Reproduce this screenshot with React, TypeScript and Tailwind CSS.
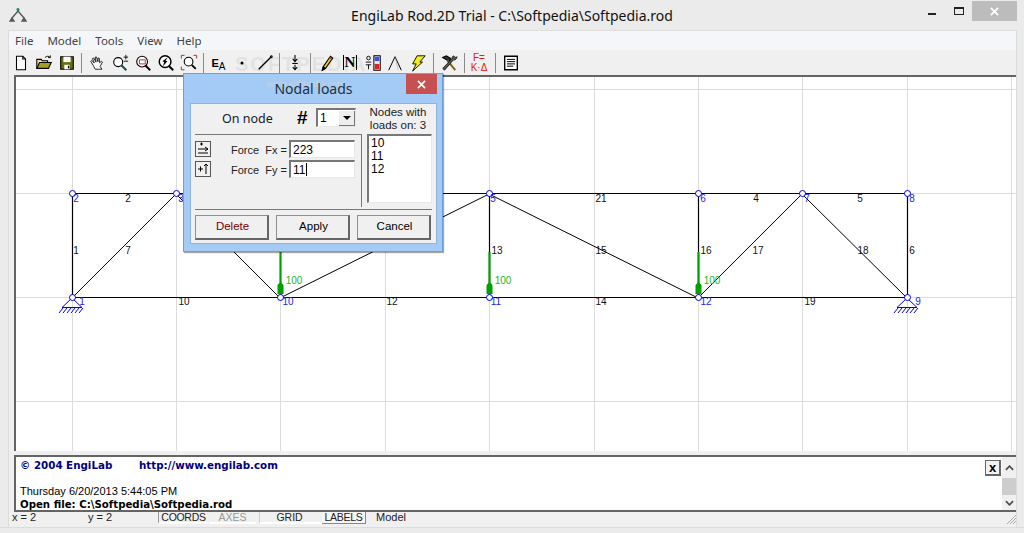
const FONT_UI = "font-['Liberation_Sans',sans-serif]";

const GRID_X = [72, 176, 280, 385, 489, 594, 698, 802, 907, 1011];
const GRID_Y = [90, 194, 298, 402];

const NODES: [number, number][] = [
  [72, 298], [72, 194], [176, 194], [489, 194], [698, 194], [802, 194],
  [907, 194], [907, 298], [280, 298], [489, 298], [698, 298],
];

const THICK: [number, number, number, number][] = [
  [72, 194, 907, 194],
  [72, 298, 907, 298],
  [72, 194, 72, 298],
  [489, 194, 489, 298],
  [698, 194, 698, 298],
  [907, 194, 907, 298],
];

const THIN: [number, number, number, number][] = [
  [72, 298, 176, 194],
  [176, 194, 280, 298],
  [280, 298, 489, 194],
  [489, 194, 698, 298],
  [698, 298, 802, 194],
  [802, 194, 907, 298],
];

const BAR_LABELS: [string, number, number][] = [
  ["1", 76, 254], ["7", 128, 254], ["2", 128, 202], ["10", 184, 305], ["12", 392, 305],
  ["14", 601, 305], ["19", 810, 305], ["13", 497, 254], ["15", 601, 254], ["21", 601, 202],
  ["16", 706, 254], ["17", 758, 254], ["4", 756, 202], ["5", 860, 202], ["18", 863, 254],
  ["6", 912, 254],
];

const NODE_LABELS: [string, number, number][] = [
  ["1", 82, 305], ["2", 76, 202], ["3", 181, 202], ["5", 493, 202], ["6", 703, 202],
  ["7", 807, 202], ["8", 912, 202], ["9", 918, 305], ["10", 288, 305], ["11", 496, 305],
  ["12", 706, 305],
];

function Support({ x, y }: { x: number; y: number }) {
  return (
    <g stroke="#0000e0" strokeWidth="1" fill="none">
      <path d={`M${x} ${y} L${x - 10} ${y + 9.5} H${x + 10} Z`} />
      {[-9, -5, -1, 3, 7, 11].map((d) => (
        <path key={d} d={`M${x + d} ${y + 10} l-4 5`} />
      ))}
    </g>
  );
}

function Load({ x }: { x: number }) {
  return (
    <g>
      <path d={`M${x + 0.5} 252 V296`} stroke="#00a000" strokeWidth="2.2" />
      <path d={`M${x - 2.5} 294 V285 L${x + 0.5} 282 L${x + 3.5} 285 V294 Z`} fill="#00a000" />
      <text x={x + 14} y={284} fontSize="10" fill="#18b82a" textAnchor="middle" fontFamily="Liberation Sans">
        100
      </text>
    </g>
  );
}

function Truss() {
  return (
    <svg viewBox="16 77 1000 374" className="block h-[374px] w-[1000px]">
      {GRID_X.map((x) => (
        <path key={x} d={`M${x + 0.5} 75 V451`} stroke="#dcdcdc" strokeWidth="1" />
      ))}
      {GRID_Y.map((y) => (
        <path key={y} d={`M14 ${y - 0.5} H1016`} stroke="#dcdcdc" strokeWidth="1" />
      ))}
      {THICK.map(([a, b, c, d]) => (
        <line
          key={`${a}-${b}-${c}-${d}`}
          x1={a === c ? a + 0.5 : a}
          y1={a === c ? b : b - 0.5}
          x2={a === c ? c + 0.5 : c}
          y2={a === c ? d : d - 0.5}
          stroke="#000"
          strokeWidth="1.2"
        />
      ))}
      {THIN.map(([a, b, c, d]) => (
        <line key={`${a}-${b}-${c}-${d}`} x1={a} y1={b} x2={c} y2={d} stroke="#000" strokeWidth="1" />
      ))}
      <Load x={280} />
      <Load x={489} />
      <Load x={698} />
      <Support x={72} y={298} />
      <Support x={907} y={298} />
      {NODES.map(([x, y]) => (
        <circle key={`${x}-${y}`} cx={x + 0.5} cy={y - 0.5} r="3" fill="#fff" stroke="#0000e0" strokeWidth="1" />
      ))}
      <g fontFamily="Liberation Sans" fontSize="10" textAnchor="middle">
        {BAR_LABELS.map(([t, x, y]) => (
          <text key={`b${t}`} x={x} y={y} fill="#111">
            {t}
          </text>
        ))}
        {NODE_LABELS.map(([t, x, y]) => (
          <text key={`n${t}`} x={x} y={y} fill="#2222ee">
            {t}
          </text>
        ))}
      </g>
    </svg>
  );
}

function Tool({ children, w = 23 }: { children: React.ReactNode; w?: number }) {
  return (
    <div className="flex h-[24px] items-center justify-center" style={{ width: w }}>
      <svg viewBox="0 0 20 20" className="h-[18px] w-[18px]" fill="none" stroke="#000" strokeWidth="1.2">
        {children}
      </svg>
    </div>
  );
}

function Sep() {
  return <div className="mx-[3px] h-[20px] w-px shrink-0 bg-[#8a8a8a]" />;
}

function Toolbar() {
  return (
    <div className="relative flex h-[25px] items-center overflow-hidden bg-[#f0f0f0]">
      <span className="absolute left-[226px] top-[-1px] font-['Liberation_Sans',sans-serif] text-[20px] font-bold tracking-[2px] text-[#e2e2e2]">
        SOFTPEDIA
      </span>
      <div className="relative flex items-center">
        <Tool>
          <path d="M5 2.5h7l3 3v12H5z" fill="#fff" />
          <path d="M12 2.5v3h3" />
        </Tool>
        <Tool>
          <path d="M2 16V6h5l1 1.5h6V10" fill="#f4e08c" />
          <path d="M2 16l3-6.5h13L15 16z" fill="#a8a020" />
          <path d="M11 4c2-2 4-2 6 0m0 0v-2.5m0 2.5h-2.5" strokeWidth="1" />
        </Tool>
        <Tool>
          <path d="M3 3h14v14H3z" fill="#6b6b10" />
          <path d="M6 3h8v6H6z" fill="#fff" stroke="none" />
          <path d="M7 12h6v5H7z" fill="#fff" stroke="none" />
          <path d="M11 13h1.5v3H11z" fill="#000" stroke="none" />
        </Tool>
        <Sep />
        <Tool>
          <path d="M6 13L3 8l1-1 3 3L5 5l1.2-.6L9 9 8 3.5l1.4-.2L11 8.5l.2-4 1.3.2.3 5 2.2-1.6 1 .8-2.5 5 2 3H8z" strokeWidth="0.9" fill="#fff" />
        </Tool>
        <Tool>
          <circle cx="8" cy="9" r="5" fill="#fff" />
          <path d="M11.5 12.5L17 18" strokeWidth="2.2" stroke="#105050" />
          <path d="M14 3.5h5M16.5 1v5M14 8h5" strokeWidth="1" />
        </Tool>
        <Tool>
          <circle cx="9" cy="8.5" r="6" fill="#fff" />
          <path d="M12.5 12.5L18 18" strokeWidth="2.2" />
          <path d="M6 6.5h6.5v4.5H6z" stroke="#b02020" strokeWidth="1" />
        </Tool>
        <Tool>
          <circle cx="9" cy="8.5" r="6.5" fill="#fff" strokeWidth="1.6" />
          <path d="M13 13l5 5" strokeWidth="2.2" />
          <path d="M12 3.5L6 8l2 1-1.500 5 5-6-2-.6z" fill="#000" stroke="none" />
        </Tool>
        <Tool>
          <circle cx="9.500" cy="8.500" r="4.800" fill="#fff" />
          <path d="M13 12l4.500 4.500" strokeWidth="2" />
          <path d="M1.500 5V1.500H5M15 1.500h3.500V5M1.500 14v3.500H5" stroke="#a02020" strokeWidth="1" />
        </Tool>
        <Sep />
        <div className={`flex h-[24px] w-[23px] items-end justify-center pb-[3px] ${FONT_UI} text-[11px] font-bold leading-none`}>
          <span className="mb-[3px]">E</span>
          <span className="text-[10px] font-normal">A</span>
        </div>
        <Tool>
          <circle cx="10" cy="10" r="1.700" fill="#000" stroke="none" />
        </Tool>
        <Tool>
          <path d="M3 17L17 3" strokeWidth="1.500" />
          <circle cx="17" cy="3" r="1" />
        </Tool>
        <Sep />
        <Tool w={24}>
          <path d="M10 1v7M7.500 5.500L10 8.500l2.500-3" />
          <path d="M7 10.500h6" />
          <path d="M10 12v5M7.500 14.500L10 17.500l2.500-3" />
        </Tool>
        <Sep />
        <Tool w={24}>
          <path d="M7 14L15 2.500l2.500 2L9.500 16l-3.500 2z" fill="#f0d020" />
          <path d="M6 18l1-4 2.500 2z" fill="#000" />
          <path d="M14 4l2.500 2" stroke="#c02020" />
        </Tool>
        <div className="flex h-[24px] w-[24px] items-center justify-center font-['Liberation_Serif',serif] text-[17px] font-bold leading-none">
          <span className="border-x-[1.500px] border-black px-[1px] text-[15px]">N</span>
        </div>
        <Tool w={22}>
          <path d="M11 2h7v16h-7z" fill="#fff" stroke="#000" />
          <path d="M12 3h5v5h-5z" fill="#3a50e0" stroke="none" />
          <path d="M12 8h5v3h-5z" fill="#e8e8ff" stroke="none" />
          <path d="M12 11h5v6h-5z" fill="#e02020" stroke="none" />
          <circle cx="5" cy="4.500" r="2" strokeWidth="1" />
          <path d="M2 9h6M2 12h6M5 12v5" strokeWidth="1" />
        </Tool>
        <Tool w={22}>
          <path d="M3 18L10 3l7 15" strokeWidth="1.100" />
          <path d="M10 3l3.500 15" strokeWidth="0.500" stroke="#999" />
        </Tool>
        <Tool w={24}>
          <path d="M9 2h9L12 9h3L4 19l4-8H4z" fill="#f4ec20" stroke="#000" strokeWidth="1" />
        </Tool>
        <Sep />
        <Tool w={24}>
          <path d="M3 4l4-2 5 3-2 3z" fill="#333" stroke="#000" />
          <path d="M8 7l9 11" strokeWidth="2.200" stroke="#806020" />
          <path d="M15 2c1 2 3 2 4 1-.5 3-2.500 4-4 3.500L5 18l-2-2L13.500 5c-.5-1 .5-2.500 1.500-3z" fill="#555" strokeWidth="0.800" />
        </Tool>
        <Sep />
        <div className={`flex h-[24px] w-[22px] flex-col items-center justify-center ${FONT_UI} text-[10px] leading-[10px] text-[#e82010]`}>
          <span>F=</span>
          <span>K·Δ</span>
        </div>
        <div className="w-[2px]" />
        <Sep />
        <Tool w={24}>
          <path d="M3 2.500h14v15H3z" fill="#fff" strokeWidth="1.500" />
          <path d="M5.500 6h9M5.500 8.500h9M5.500 11h9M5.500 13.500h7" strokeWidth="1.100" />
        </Tool>
      </div>
    </div>
  );
}

function IconBtn({ children }: { children: React.ReactNode }) {
  return (
    <div className="h-[16px] w-[16px] border border-[#555] bg-[#f0f0f0]">
      <svg viewBox="0 0 14 14" className="block h-[14px] w-[14px]" fill="none" stroke="#000" strokeWidth="1">
        {children}
      </svg>
    </div>
  );
}

function DialogBtn({ label, red }: { label: string; red?: boolean }) {
  return (
    <div
      className={`flex h-[25px] w-[74px] items-center justify-center border border-[#8f8f8f] border-b-[2px] border-r-[2px] border-b-[#666] border-r-[#666] bg-[#f0f0f0] pl-[2px] text-[11.500px] ${red ? "text-[#800000]" : "text-black"}`}
    >
      {label}
    </div>
  );
}

function ForceRow({ label, value, caret, icon }: { label: string; value: string; caret?: boolean; icon: React.ReactNode }) {
  return (
    <div className="flex h-[20px] items-center">
      <IconBtn>{icon}</IconBtn>
      <span className="ml-[20px] mt-[2px] w-[58px] whitespace-pre text-[11px] text-[#222]">{label}</span>
      <div className="flex h-[18px] w-[66px] items-center border border-[#e8e8e8] border-l-[2px] border-t-[2px] border-l-[#777] border-t-[#777] bg-white pl-[2px] text-[12px] text-black">
        {value}
        {caret && <span className="ml-px h-[13px] w-px bg-black" />}
      </div>
    </div>
  );
}

function NodalLoads() {
  return (
    <div className={`absolute left-[183px] top-[73px] h-[179px] w-[260px] border border-[#6f9fd3] bg-[#a3cbf6] shadow-[1px_1px_1px_rgba(0,0,0,0.35)] ${FONT_UI}`}>
      <div className="relative h-[29px]">
        <span className="absolute left-[83px] top-[4px] text-[9px] text-[#c4d2e2]">www.softpedia.com</span>
        <div className="absolute inset-x-0 top-[5px] pl-[1px] text-center font-['Noto_Sans',sans-serif] text-[14px] leading-[20px] text-[#203040]">
          Nodal loads
        </div>
        <div className="absolute right-[5px] top-0 flex h-[20px] w-[31px] items-center justify-center bg-[#c75050]">
          <svg viewBox="0 0 10 10" className="h-[9px] w-[9px]" stroke="#fff" strokeWidth="1.800">
            <path d="M1 1l8 8M9 1l-8 8" />
          </svg>
        </div>
      </div>
      <div className="mx-[6px] h-[141px] w-[247px] border border-[#8fb4dc] bg-[#f0f0f0] px-[4px]">
        <div className="flex h-[30px] pt-[4px]">
          <span className="ml-[27px] mt-[2px] w-[75px] font-['Noto_Sans',sans-serif] text-[12.500px] text-[#102030]">On node</span>
          <span className="mt-[-3px] w-[19px] text-[19px] font-bold leading-[26px]">#</span>
          <div className="flex h-[19px] w-[40px] items-center justify-between border border-[#e8e8e8] border-l-[2px] border-t-[2px] border-l-[#777] border-t-[#777] bg-white pl-[2px] text-[12px]">
            1
            <div className="flex h-[15px] w-[16px] items-center justify-center border-b border-r border-[#777] bg-[#eee]">
              <div className="h-0 w-0 border-x-[4px] border-t-[4px] border-x-transparent border-t-black" />
            </div>
          </div>
          <div className="ml-[10px] mt-[-2px] w-[64px] text-center text-[11.500px] leading-[13px] text-[#222]">
            Nodes with loads on: 3
          </div>
        </div>
        <div className="flex h-[74px]">
          <div className="h-[73px] w-[167px] border-r border-t border-[#777] pt-[4px]">
            <ForceRow
              label="Force  Fx ="
              value="223"
              icon={<path d="M2 7h10m-3-2l3 2-3 2M4 2h3M5.500 .5v3M2 11h10" />}
            />
            <ForceRow
              label="Force  Fy ="
              value="11"
              caret
              icon={<path d="M2 7h5M4.500 4.500v5M10 12V2M8 4l2-2 2 2" />}
            />
          </div>
          <div className="ml-[5px] h-[69px] w-[65px] border border-[#e8e8e8] border-l-[2px] border-t-[2px] border-l-[#777] border-t-[#777] bg-white pl-[2px] pt-px text-[12px] leading-[13px] text-black">
            <div>10</div>
            <div>11</div>
            <div>12</div>
          </div>
        </div>
        <div className="mt-px flex h-[32px] items-start justify-between border-t border-[#777] pr-[1px] pt-[5px]">
          <DialogBtn label="Delete" red />
          <DialogBtn label="Apply" />
          <DialogBtn label="Cancel" />
        </div>
      </div>
    </div>
  );
}

function LogPanel() {
  return (
    <div className="mt-[4px] flex h-[57px] border-b-2 border-l-2 border-t-2 border-[#646464] bg-white">
      <div className="relative flex-1 overflow-hidden pl-[4px]">
        <div className="flex h-[17px] items-center font-['DejaVu_Sans',sans-serif] text-[10.300px] font-bold text-[#000080]">
          <span className="w-[119px]">© 2004 EngiLab</span>
          <span>http://www.engilab.com</span>
        </div>
        <div className={`mt-[11px] text-[11px] leading-[13px] text-black ${FONT_UI}`}>
          Thursday 6/20/2013 5:44:05 PM
        </div>
        <div className="font-['DejaVu_Sans',sans-serif] text-[10.200px] font-bold leading-[13px] text-black">
          Open file: C:\Softpedia\Softpedia.rod
        </div>
        <div className="absolute right-[1px] top-[3px] flex h-[16px] w-[16px] items-center justify-center border border-[#666] border-b-[2px] border-r-[2px] bg-[#f2f2f2] font-['Liberation_Sans',sans-serif] text-[13px] font-bold text-black">
          x
        </div>
      </div>
      <div className="flex w-[14px] flex-col items-center bg-[#f0f0f0]">
        <div className="flex h-[21px] items-center justify-center">
          <svg viewBox="0 0 10 6" className="h-[6px] w-[9px]" fill="none" stroke="#505050" strokeWidth="2">
            <path d="M1 5l4-4 4 4" />
          </svg>
        </div>
        <div className="h-[17px] w-full bg-[#cdcdcd]" />
        <div className="flex flex-1 items-center justify-center">
          <svg viewBox="0 0 10 6" className="h-[6px] w-[9px]" fill="none" stroke="#505050" strokeWidth="2">
            <path d="M1 1l4 4 4-4" />
          </svg>
        </div>
      </div>
    </div>
  );
}

function StatusBar() {
  return (
    <div className={`relative -ml-[2px] flex h-[15px] items-start text-[10.500px] leading-[11px] text-[#222] ${FONT_UI}`}>
      <span className="w-[76px] text-[11px]">x = 2</span>
      <span className="w-[70px] text-[11px]">y = 2</span>
      <div className="h-[12px] w-[50px] border-b-2 border-l border-b-white border-l-[#999] bg-[#f0f0f0] text-center tracking-[-0.3px]">COORDS</div>
      <div className="ml-[1px] h-[12px] w-[47px] border-b-2 border-b-white text-center text-[#999]">AXES</div>
      <div className="ml-[3px] h-[12px] w-[63px] border-b-2 border-l border-b-white border-l-[#ccc] pr-[3px] text-center">GRID</div>
      <div className="h-[12px] w-[44px] border-b border-r border-[#888] bg-[#f6f6f6] text-center tracking-[-0.3px]">LABELS</div>
      <span className="ml-[10px] text-[11px]">Model</span>
      <svg viewBox="0 0 10 10" className="absolute bottom-[3px] right-0 h-[10px] w-[10px]" stroke="#aaa" strokeWidth="1">
        <path d="M1 10L10 1M4 10l6-6M7 10l3-3" />
      </svg>
    </div>
  );
}

export default function App() {
  return (
    <div className="relative h-[533px] w-[1024px] overflow-hidden bg-[#ebebeb]">
      <div className="relative flex h-[30px] items-center justify-center">
        <svg viewBox="0 0 18 16" className="absolute left-[9px] top-[7px] h-[16px] w-[18px]" fill="none" stroke="#555" strokeWidth="1.300">
          <path d="M9 4L3 11M9 4l6 7" />
          <path d="M1 14l2-3 2 3zM13 14l2-3 2 3z" fill="#777" />
          <circle cx="9" cy="2.500" r="1.500" fill="#208050" stroke="none" />
        </svg>
        <span className="font-['Noto_Sans',sans-serif] text-[14px] text-[#111]">
          EngiLab Rod.2D Trial - C:\Softpedia\Softpedia.rod
        </span>
        <div className="absolute right-[7px] top-[1px] flex h-[20px] w-[45px] items-center justify-center bg-[#bcbcbc]">
          <svg viewBox="0 0 10 10" className="h-[9px] w-[9px]" stroke="#fff" strokeWidth="2">
            <path d="M1 1l8 8M9 1l-8 8" />
          </svg>
        </div>
        <div className="absolute right-[60px] top-[7px] h-[8px] w-[10px] border border-t-[2px] border-[#222]" />
        <div className="absolute right-[88px] top-[13px] h-[2px] w-[8px] bg-[#222]" />
      </div>
      <div className="ml-[8px] w-[1009px] border-l border-r border-t border-[#dcdcdc] bg-[#f0f0f0]">
        <div className="flex h-[19px] items-center gap-[14px] bg-[#f5f6f9] pl-[6px] font-['Noto_Sans',sans-serif] text-[11.500px] text-[#444]">
          <span>File</span>
          <span>Model</span>
          <span>Tools</span>
          <span>View</span>
          <span>Help</span>
        </div>
        <Toolbar />
        <div className="pl-[5px] pr-0">
          <div className="border-l-2 border-t-2 border-[#646464] bg-white">
            <Truss />
          </div>
          <LogPanel />
          <StatusBar />
        </div>
      </div>
      <div className="absolute inset-x-0 top-[527px] h-px bg-[#dcdcdc]" />
      <NodalLoads />
    </div>
  );
}
